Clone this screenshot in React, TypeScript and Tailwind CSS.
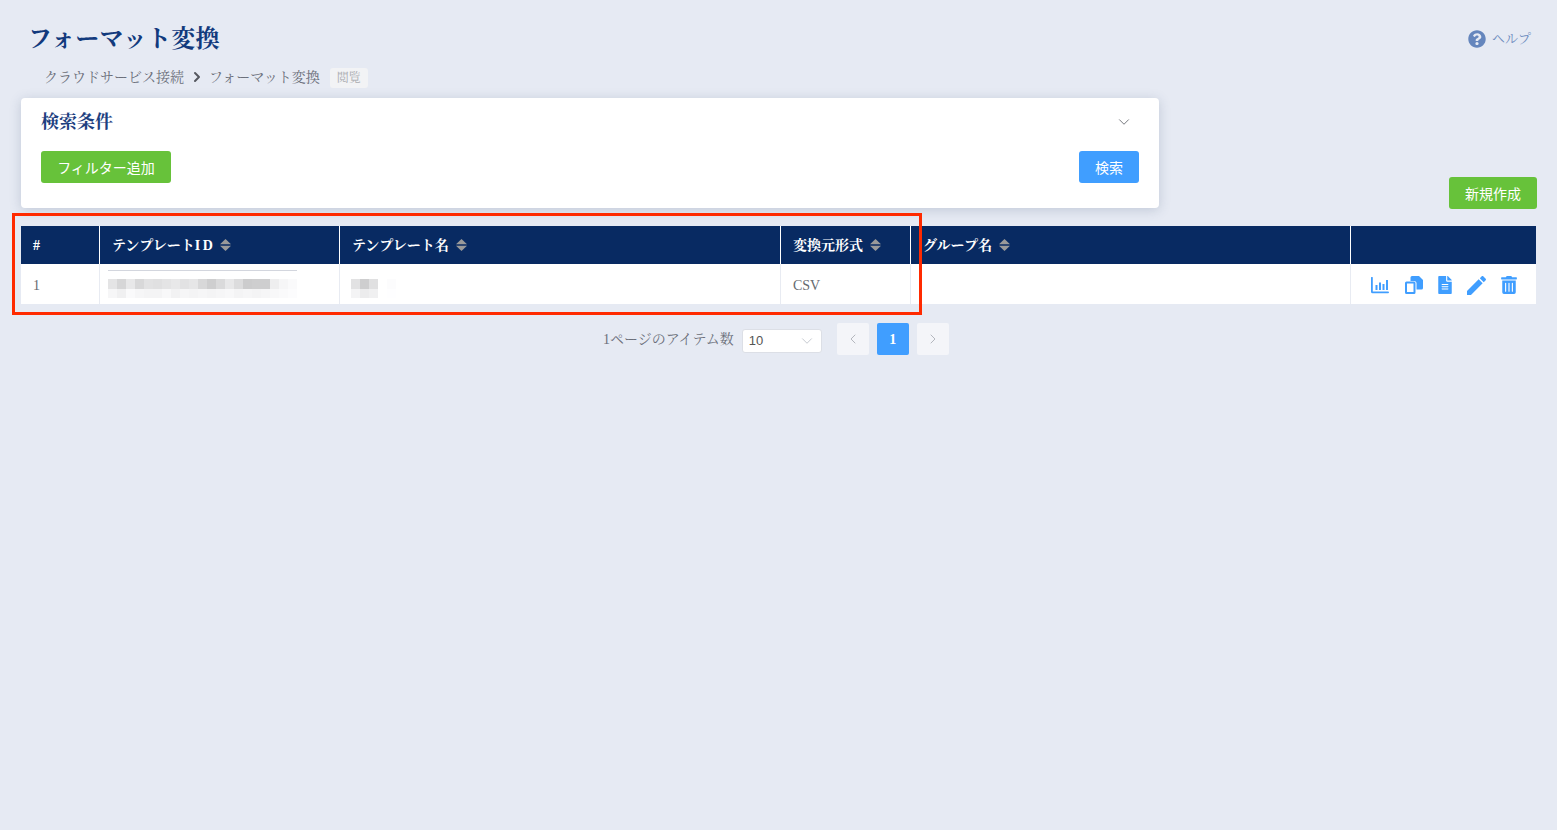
import type { ReactNode } from 'react'
import { FaFileAlt, FaTrashAlt, FaQuestionCircle } from 'react-icons/fa'
import { ChevronDown, ChevronLeft, ChevronRight } from 'lucide-react'

const SERIF = { fontFamily: '"Liberation Serif", "Noto Serif CJK JP", "Noto Sans CJK JP", serif' }

// ぼかしセルの濃淡
const ID_TOP = [228, 214, 232, 216, 226, 224, 228, 232, 226, 230, 216, 206, 218, 232, 220, 204, 206, 206, 238, 246, 250]
const ID_BOTTOM = [246, 240, 250, 246, 244, 244, 248, 242, 246, 244, 246, 244, 246, 248, 244, 246, 244, 246, 248, 250, 252]
const NAME_TOP = [226, 206, 224, 255, 252]
const NAME_BOTTOM = [244, 236, 240, 255, 254]

function Blur({ top, bottom }: { top: number[]; bottom: number[] }) {
  return (
    <div className="flex flex-col">
      {[top, bottom].map((row, r) => (
        <div key={r} className="flex h-[9.5px]">
          {row.map((v, i) => (
            <div key={i} className="w-[9px]" style={{ backgroundColor: `rgb(${v},${v},${v + 1})` }} />
          ))}
        </div>
      ))}
    </div>
  )
}

function SortIcon() {
  return (
    <svg width="11" height="12" viewBox="0 0 11 12" className="ml-[7px] shrink-0">
      <path d="M5.500 0 L11 5.200 L0 5.200 Z" fill="#9a9a9a" />
      <path d="M0 6.800 L11 6.800 L5.500 12 Z" fill="#9a9a9a" />
    </svg>
  )
}

function ChartIcon() {
  return (
    <svg width="18" height="17" viewBox="0 0 18 17" fill="#409eff">
      <path d="M0 0.800a0.900 0.900 0 0 1 1.800 0V14.400H17.100a0.900 0.900 0 0 1 0 1.800H1.500A1.500 1.500 0 0 1 0 14.700Z" />
      <rect x="4.500" y="8" width="2" height="5" />
      <rect x="8" y="5.500" width="2" height="7.500" />
      <rect x="11.500" y="7" width="2" height="6" />
      <rect x="15" y="3" width="2" height="10" />
    </svg>
  )
}

function CopyIcon() {
  return (
    <svg width="18" height="18" viewBox="0 0 18 18" fill="#409eff">
      <path d="M7 0h7l4 4v8a1.500 1.500 0 0 1-1.500 1.500H11.500V7.500A2.500 2.500 0 0 0 9 5H5.500V1.500A1.500 1.500 0 0 1 7 0Z" />
      <path d="M1.500 5.500H9A1.500 1.500 0 0 1 10.500 7v9.500A1.500 1.500 0 0 1 9 18H1.500A1.500 1.500 0 0 1 0 16.500V7a1.500 1.500 0 0 1 1.500-1.500Zm.5 2v8.500h6.500V7.500Z" fillRule="evenodd" />
    </svg>
  )
}

function EditIcon() {
  return (
    <svg width="19" height="19" viewBox="3 3 18 18" fill="#409eff">
      <path d="M3 17.250V21h3.750L17.810 9.940l-3.750-3.750L3 17.250zM20.710 7.040c.39-.39.39-1.020 0-1.410l-2.340-2.340c-.39-.39-1.020-.39-1.410 0l-1.830 1.830 3.750 3.750 1.830-1.830z" />
    </svg>
  )
}

function HeaderCell({ label, width, sort = true, last = false }: { label?: ReactNode; width: string; sort?: boolean; last?: boolean }) {
  return (
    <div className={`${width} flex items-center pl-[12px] font-bold text-[14px] text-white ${last ? '' : 'border-r border-white'}`}>
      {label}
      {sort && label && <SortIcon />}
    </div>
  )
}

export default function App() {
  return (
    <div className="relative min-h-screen bg-[#e6eaf3] pb-[40px]" style={SERIF}>
      {/* Header */}
      <div className="flex items-start justify-between pl-[28px] pr-[26px] pt-[24px]">
        <h1 className="text-[24px] leading-[30px] font-bold tracking-[0.25px] text-[#123a7d]">フォーマット変換</h1>
        <div className="flex items-center gap-[6px] pt-[5px] text-[13px] text-[#6f8dbf]">
          <FaQuestionCircle className="text-[18px] text-[#6586bd]" />
          <span>ヘルプ</span>
        </div>
      </div>

      {/* Breadcrumb */}
      <div className="mt-[13px] flex h-[20px] items-center pl-[44px] text-[14px] text-[#6b6f7a]">
        <span>クラウドサービス接続</span>
        <ChevronRight size={16} strokeWidth={3} className="ml-[5px] mr-[4px] text-[#55585f]" />
        <span>フォーマット変換</span>
        <span className="ml-[10px] mt-[1px] rounded-[3px] bg-[#f2f3f5] px-[7px] text-[12px] leading-[20px] text-[#a9abb0]">閲覧</span>
      </div>

      {/* Search + create */}
      <div className="mt-[11px] flex items-end justify-between pl-[21px] pr-[20px]">
        <div className="h-[110px] w-[1138px] rounded-[4px] bg-white px-[20px] pt-[11px] shadow-[0_2px_12px_rgba(60,80,120,0.22)]">
          <div className="flex items-center justify-between pr-[6px]">
            <span className="text-[18px] leading-[26px] font-bold text-[#1d4080]">検索条件</span>
            <ChevronDown size={18} strokeWidth={1.2} className="text-[#666a70]" />
          </div>
          <div className="mt-[16px] flex justify-between" style={{ fontFamily: '"Noto Sans CJK JP", sans-serif' }}>
            <button className="h-[32px] w-[130px] rounded-[3px] bg-[#67c23a] text-[14px] text-white">フィルター追加</button>
            <button className="h-[32px] w-[60px] rounded-[3px] bg-[#409eff] text-[14px] text-white">検索</button>
          </div>
        </div>
        <button className="mb-[-1px] h-[32px] w-[88px] rounded-[3px] bg-[#67c23a] text-[14px] text-white" style={{ fontFamily: '"Noto Sans CJK JP", sans-serif' }}>新規作成</button>
      </div>

      {/* Table */}
      <div className="ml-[21px] mr-[21px] mt-[18px]">
        <div className="flex h-[38px] bg-[#082a62]">
          <HeaderCell label="#" width="w-[79px]" sort={false} />
          <HeaderCell label={<>テンプレート<span className="tracking-[2.5px]">I</span>D</>} width="w-[240px]" />
          <HeaderCell label="テンプレート名" width="w-[441px]" />
          <HeaderCell label="変換元形式" width="w-[130px]" />
          <HeaderCell label="グループ名" width="w-[440px]" />
          <HeaderCell width="flex-1" last />
        </div>
        <div className="flex h-[40px] bg-white text-[14px] text-[#66696f]">
          <div className="flex w-[79px] items-center border-r border-[#e8ebf2] pl-[12px] pt-[2px]">1</div>
          <div className="w-[240px] border-r border-[#e8ebf2] pl-[8px] pt-[6px]">
            <div className="mb-[8px] h-px w-[189px] bg-[#d3d6de]" />
            <Blur top={ID_TOP} bottom={ID_BOTTOM} />
          </div>
          <div className="w-[441px] border-r border-[#e8ebf2] pl-[11px] pt-[15px]">
            <Blur top={NAME_TOP} bottom={NAME_BOTTOM} />
          </div>
          <div className="flex w-[130px] items-center border-r border-[#e8ebf2] pl-[12px] pt-[2px]">CSV</div>
          <div className="w-[440px] border-r border-[#e8ebf2]" />
          <div className="flex flex-1 items-center gap-[15px] pl-[20px] pt-[2px] text-[#409eff]">
            <ChartIcon />
            <div className="ml-[1px]"><CopyIcon /></div>
            <FaFileAlt className="h-[18px] w-[14px]" />
            <EditIcon />
            <FaTrashAlt className="h-[18px] w-[16px]" />
          </div>
        </div>
      </div>

      {/* Pagination */}
      <div className="mt-[19px] flex items-center pl-[603px] text-[14px] text-[#6b6f7a]">
        <span>1ページのアイテム数</span>
        <div className="ml-[8px] mt-[4px] flex h-[24px] w-[80px] items-center justify-between rounded-[3px] border border-[#dcdfe6] bg-white pl-[6px] pr-[5px] text-[#555]" style={{ fontFamily: '"Liberation Sans", sans-serif' }}>
          <span className="text-[13px]">10</span>
          <ChevronDown size={18} strokeWidth={1.2} className="text-[#c0c4cc]" />
        </div>
        <button className="ml-[15px] flex h-[32px] w-[32px] items-center justify-center rounded-[2px] bg-[#f4f5f9] text-[#b4b7be]">
          <ChevronLeft size={16} strokeWidth={1.5} />
        </button>
        <button className="ml-[8px] h-[32px] w-[32px] rounded-[2px] bg-[#409eff] font-bold text-white">1</button>
        <button className="ml-[8px] flex h-[32px] w-[32px] items-center justify-center rounded-[2px] bg-[#f4f5f9] text-[#b4b7be]">
          <ChevronRight size={16} strokeWidth={1.5} />
        </button>
      </div>

      {/* 注釈の赤枠 */}
      <div className="pointer-events-none absolute left-[12px] top-[213px] h-[102px] w-[910px] border-[3px] border-[#ff2a00]" />
    </div>
  )
}
